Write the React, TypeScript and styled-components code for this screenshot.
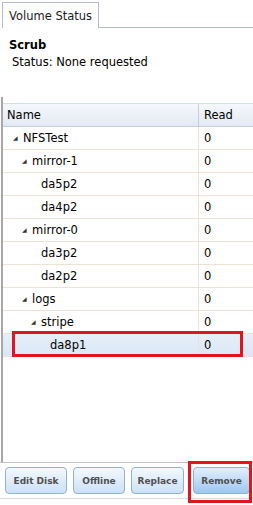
import React from "react";
import styled, { createGlobalStyle } from "styled-components";

const GlobalStyle = createGlobalStyle`
  html, body {
    margin: 0;
    padding: 0;
    background: #ffffff;
  }
  body {
    font-family: "DejaVu Sans", Verdana, sans-serif;
    font-size: 11.5px;
    color: #000;
  }
`;

const Page = styled.div`
  position: relative;
  width: 253px;
  height: 505px;
  overflow: hidden;
  display: flex;
  flex-direction: column;
  background: #fff;
`;

const TabStrip = styled.div`
  display: flex;
  align-items: flex-end;
  height: 28px;
  padding-left: 2px;
  flex-shrink: 0;
`;

const Tab = styled.div`
  height: 25px;
  padding: 0 6px;
  border: 1px solid #b4bccc;
  border-bottom: none;
  background: #fff;
  display: flex;
  align-items: center;
  color: #1a1a1a;
`;

const TabFill = styled.div`
  flex: 1;
  border-bottom: 1px solid #b4bccc;
`;

const Info = styled.div`
  padding: 9px 0 0 9px;
  height: 60px;
  flex-shrink: 0;
`;

const InfoTitle = styled.div`
  font-weight: bold;
  line-height: 16px;
`;

const InfoLine = styled.div`
  padding-left: 3px;
  line-height: 19px;
`;

const GridPanel = styled.div`
  flex: 1;
  margin-left: 1px;
  border-left: 2px solid #a8a8a8;
  padding-top: 6px;
  display: flex;
  flex-direction: column;
`;

const GridRow = styled.div<{ $header?: boolean; $selected?: boolean }>`
  display: grid;
  grid-template-columns: 196px 1fr;
  height: 22px;
  border-bottom: 1px solid ${(p) => (p.$header ? "#c5cfdc" : "#efe2d4")};
  border-top: ${(p) => (p.$header ? "1px solid #d6dde8" : "none")};
  background: ${(p) =>
    p.$header
      ? "linear-gradient(#f5f8fc, #e3eaf3)"
      : p.$selected
      ? "linear-gradient(#e6eff9, #d9e7f6)"
      : "#fff"};
`;

const NameCell = styled.div<{ $indent: number; $header?: boolean }>`
  display: flex;
  align-items: center;
  padding-left: ${(p) => p.$indent}px;
  border-right: 1px solid ${(p) => (p.$header ? "#c5cfdc" : "#efe2d4")};
  white-space: nowrap;
`;

const ReadCell = styled.div`
  display: flex;
  align-items: center;
  padding-left: 5px;
`;

const Arrow = styled.span`
  width: 10px;
  font-size: 6px;
  line-height: 1;
  color: #333;
`;

const Footer = styled.div`
  border-top: 1px solid #c3c3c3;
  border-bottom: 1px solid #dcdcdc;
  height: 35px;
  margin-bottom: 6px;
  display: flex;
  align-items: center;
  padding: 0 5px;
  flex-shrink: 0;
`;

const Button = styled.button<{ $w: number; $gap?: number; $active?: boolean }>`
  height: 27px;
  padding: 0;
  width: ${(p) => p.$w}px;
  margin-right: ${(p) => p.$gap ?? 0}px;
  flex-shrink: 0;
  border: 1px solid #8fb1d3;
  border-radius: 4px;
  background: ${(p) =>
    p.$active
      ? "linear-gradient(#e2effc, #bcd9f6 55%, #9cc8f2)"
      : "linear-gradient(#f4f9fe, #dbeafa 60%, #cde2f8)"};
  font-family: "DejaVu Sans", Verdana, sans-serif;
  font-weight: bold;
  font-size: 9px;
  color: #505050;
`;

const Highlight = styled.div<{ $x: number; $y: number; $w: number; $h: number }>`
  position: absolute;
  left: ${(p) => p.$x}px;
  top: ${(p) => p.$y}px;
  width: ${(p) => p.$w}px;
  height: ${(p) => p.$h}px;
  border: 3px solid #e2141c;
  box-sizing: border-box;
  pointer-events: none;
`;

type Node = { name: string; level: number; branch: boolean; selected?: boolean };

const rows: Node[] = [
  { name: "NFSTest", level: 0, branch: true },
  { name: "mirror-1", level: 1, branch: true },
  { name: "da5p2", level: 2, branch: false },
  { name: "da4p2", level: 2, branch: false },
  { name: "mirror-0", level: 1, branch: true },
  { name: "da3p2", level: 2, branch: false },
  { name: "da2p2", level: 2, branch: false },
  { name: "logs", level: 1, branch: true },
  { name: "stripe", level: 2, branch: true },
  { name: "da8p1", level: 3, branch: false, selected: true },
];

const App = () => {
  return (
    <Page>
      <GlobalStyle />
      <TabStrip>
        <Tab>Volume Status</Tab>
        <TabFill />
      </TabStrip>
      <Info>
        <InfoTitle>Scrub</InfoTitle>
        <InfoLine>Status: None requested</InfoLine>
      </Info>
      <GridPanel>
        <GridRow $header>
          <NameCell $indent={4} $header>Name</NameCell>
          <ReadCell>Read</ReadCell>
        </GridRow>
        {rows.map((r) => (
          <GridRow key={r.name} $selected={r.selected}>
            <NameCell $indent={r.branch ? 10 + r.level * 9 : 20 + r.level * 9}>
              {r.branch && <Arrow>◢</Arrow>}
              {r.name}
            </NameCell>
            <ReadCell>0</ReadCell>
          </GridRow>
        ))}
      </GridPanel>
      <Footer>
        <Button $w={62} $gap={6}>Edit Disk</Button>
        <Button $w={52} $gap={6}>Offline</Button>
        <Button $w={53} $gap={9}>Replace</Button>
        <Button $w={57} $active>Remove</Button>
      </Footer>
      <Highlight $x={12} $y={331} $w={231} $h={26} />
      <Highlight $x={188} $y={461} $w={64} $h={42} />
    </Page>
  );
};

export default App;
